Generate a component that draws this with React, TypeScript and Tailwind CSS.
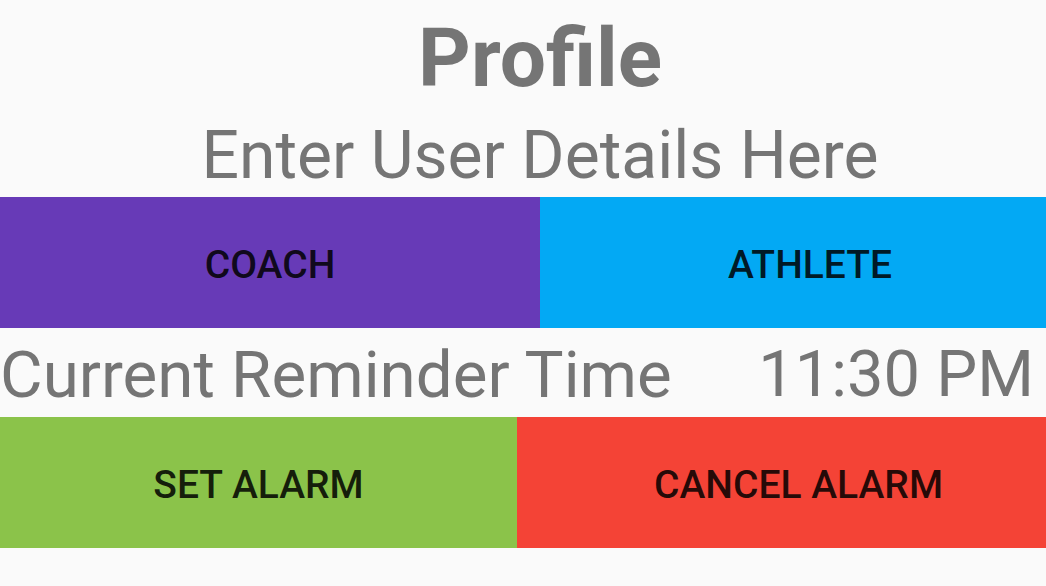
export default function App() {
  return (
    <div className="h-[586px] w-[1046px] overflow-hidden bg-[#fafafa] font-['Roboto',sans-serif] text-[#757575]">
      <div className="flex w-[1080px] flex-col">
        <h1 className="flex h-[112px] items-center justify-center pt-[4px] text-[82px] font-bold leading-none">
          Profile
        </h1>
        <p className="flex h-[85px] items-center justify-center pt-[2px] text-[66px] leading-none">
          Enter User Details Here
        </p>
        <div className="flex h-[131px]">
          <button className="w-[540px] bg-[#673ab7] pt-[6px] text-[39px] font-medium text-black/85">
            COACH
          </button>
          <button className="flex-1 bg-[#03a9f4] pt-[6px] text-[39px] font-medium text-black/85">
            ATHLETE
          </button>
        </div>
        <div className="flex h-[89px] w-[1046px] items-center justify-between pr-[12px] pt-[4px] text-[65.5px] leading-none">
          <span>Current Reminder Time</span>
          <span className="text-[65px]">11:30 PM</span>
        </div>
        <div className="flex h-[131px]">
          <button className="w-[517px] bg-[#8bc34a] pt-[6px] text-[39px] font-medium text-black/85">
            SET ALARM
          </button>
          <button className="flex-1 bg-[#f44336] pt-[6px] text-[39px] font-medium text-black/85">
            CANCEL ALARM
          </button>
        </div>
      </div>
    </div>
  );
}
